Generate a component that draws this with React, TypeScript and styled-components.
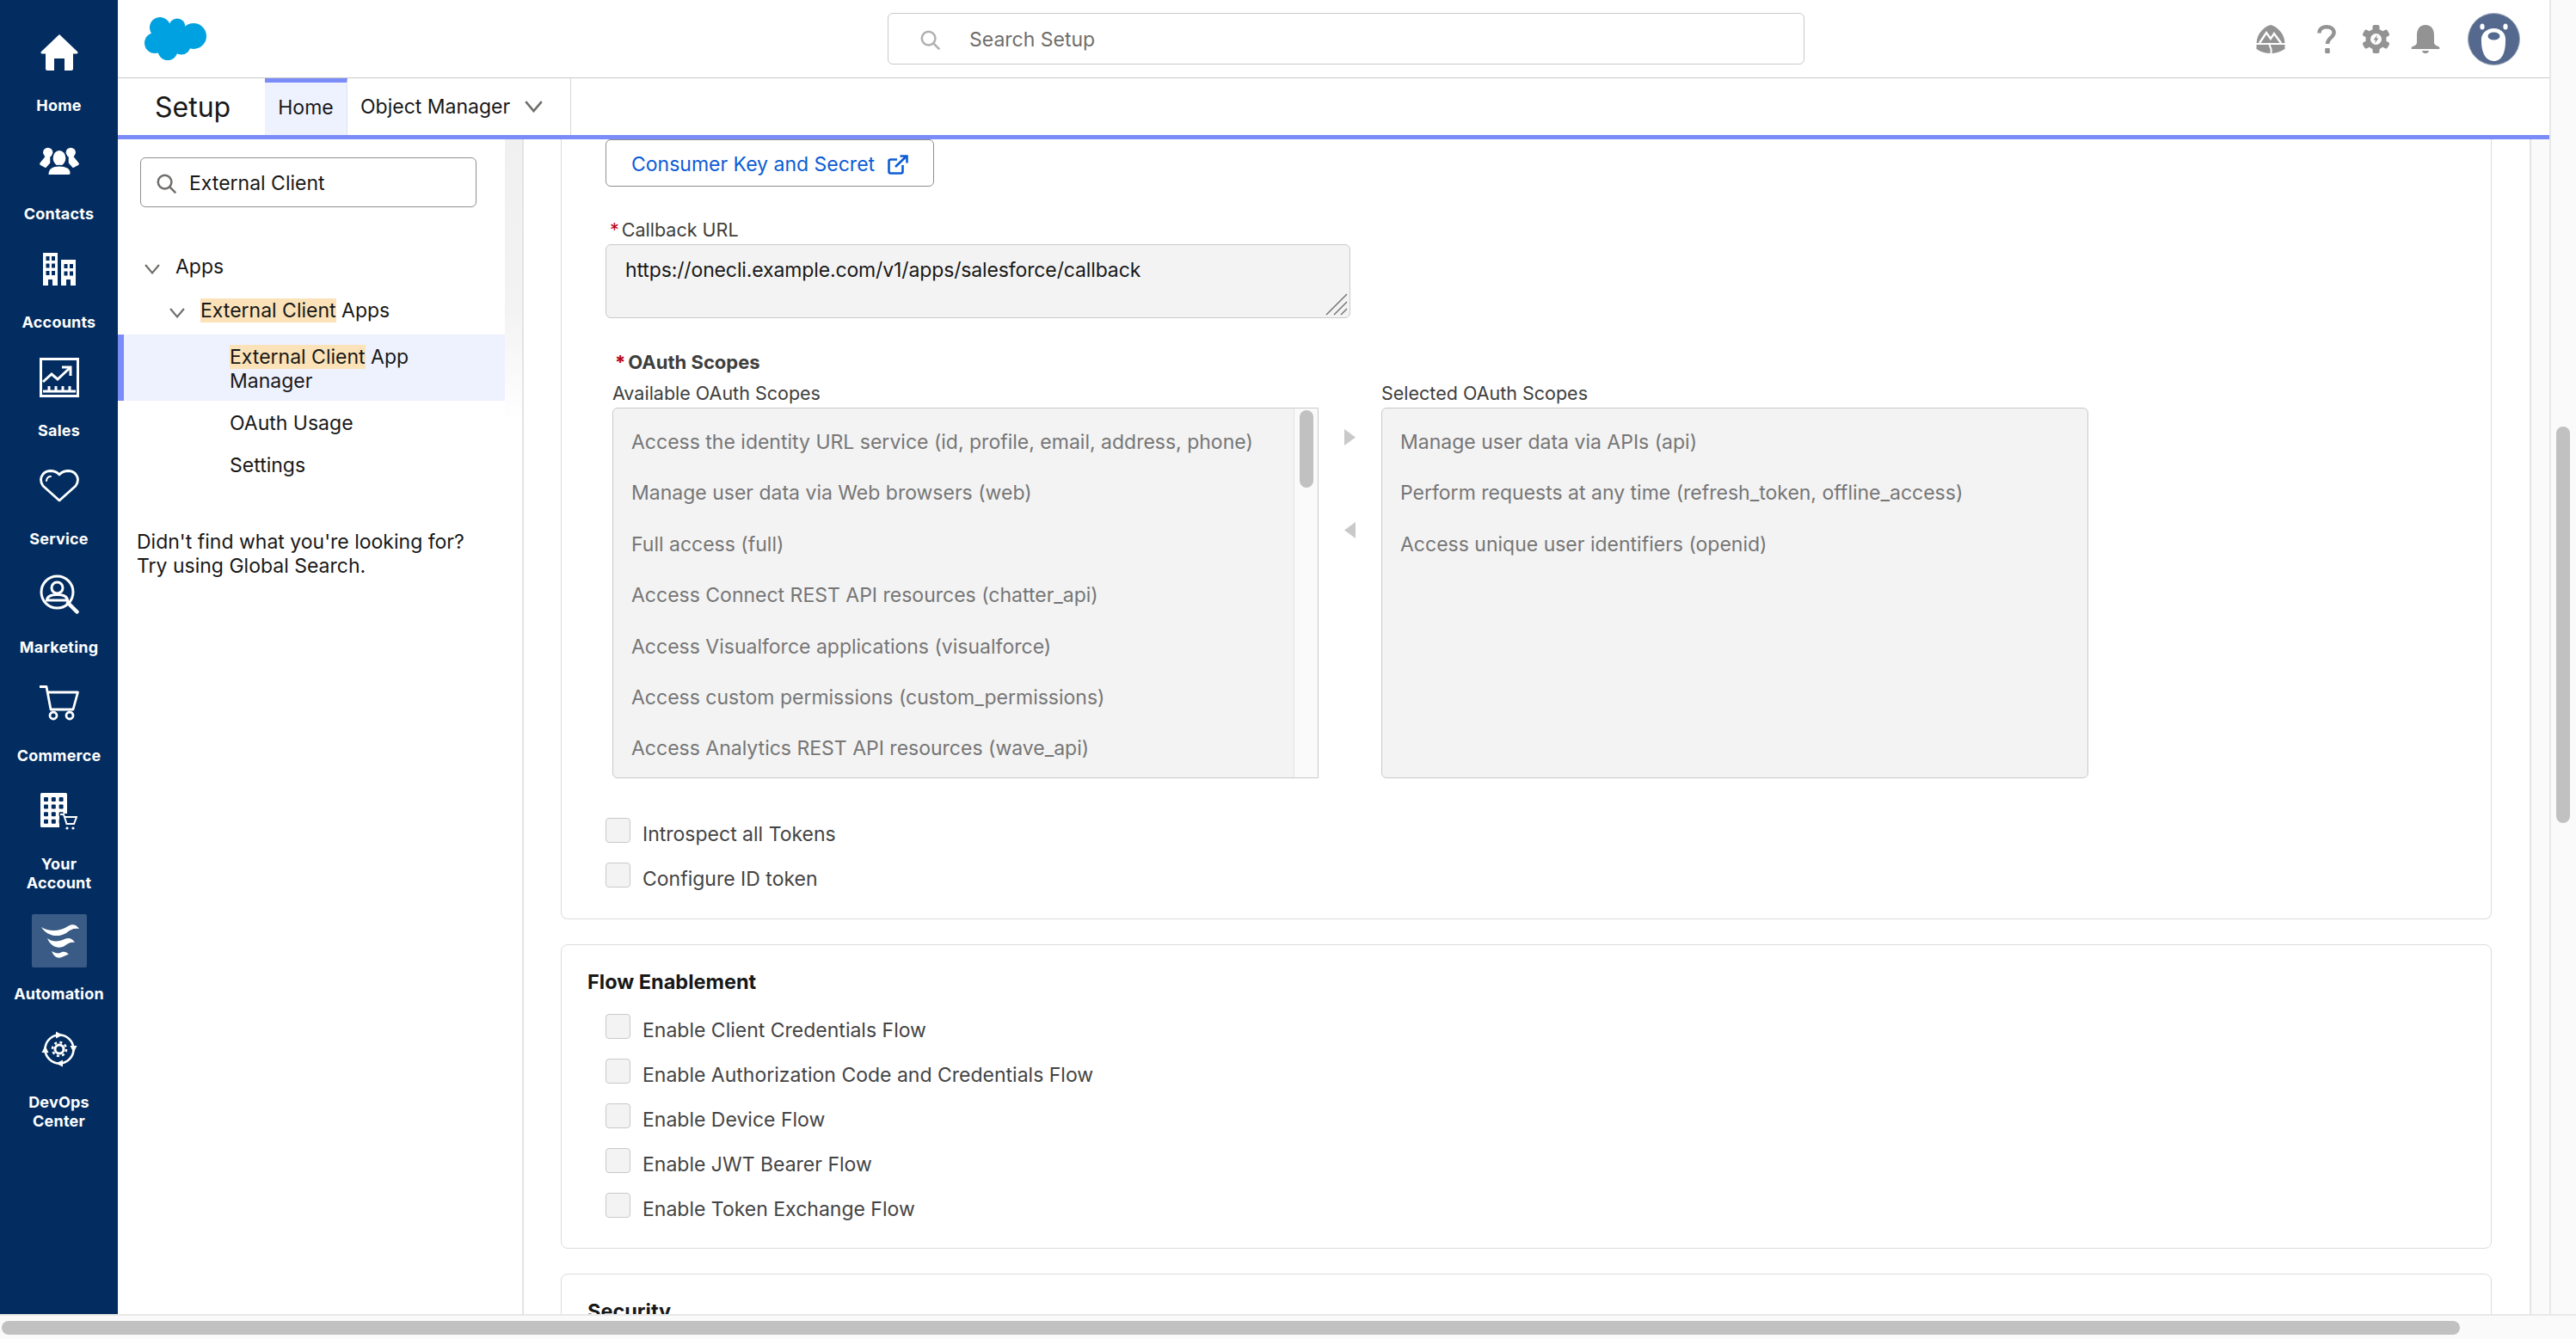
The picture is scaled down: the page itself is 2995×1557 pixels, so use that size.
import React from 'react';
import styled, { createGlobalStyle } from 'styled-components';

const Global = createGlobalStyle`
  html, body { margin: 0; padding: 0; height: 100%; overflow: hidden; background: #fff; }
  * { box-sizing: border-box; }
  body { font-family: Inter, "Liberation Sans", sans-serif; color: #181818; }
`;

const Shell = styled.div`
  display: flex;
  flex-direction: column;
  width: 100vw;
  height: 100vh;
`;
const WorkArea = styled.div`
  display: flex;
  height: 1528px;
  overflow: hidden;
`;

/* left app nav */
const Nav = styled.nav`
  width: 137px;
  flex: none;
  background: #032d60;
  padding-top: 30px;
  display: flex;
  flex-direction: column;
  align-items: center;
`;
const NavItem = styled.div<{ $tall: boolean }>`
  width: 100%;
  display: flex;
  flex-direction: column;
  align-items: center;
  margin-bottom: ${p => (p.$tall ? 25 : 22)}px;
`;
const NavIcon = styled.div<{ $active?: boolean }>`
  width: 64px;
  height: 62px;
  display: flex;
  align-items: center;
  justify-content: center;
  border-radius: 2px;
  background: ${p => (p.$active ? '#3a5b85' : 'transparent')};
`;
const NavLabel = styled.div`
  margin-top: 20px;
  color: #fff;
  font-size: 18px;
  line-height: 22px;
  font-weight: 700;
  letter-spacing: 0.2px;
  text-align: center;
  white-space: pre-line;
`;

const Main = styled.div`
  flex: 1;
  min-width: 0;
  display: flex;
  flex-direction: column;
`;

/* global header */
const Header = styled.header`
  height: 91px;
  flex: none;
  border-bottom: 1px solid #c9c9c9;
  display: grid;
  grid-template-columns: 895px 1066px 1fr;
  align-items: center;
`;
const LogoSlot = styled.div`
  padding: 0 0 0 31px;
  display: flex;
  align-items: center;
`;
const GlobalSearch = styled.div`
  height: 60px;
  border: 1px solid #c9c9c9;
  border-radius: 6px;
  display: flex;
  align-items: center;
  padding: 2px 0 0 37px;
  gap: 34px;
  font-size: 23px;
  color: #706e6b;
`;
const ToolBar = styled.div`
  display: flex;
  align-items: center;
  justify-content: flex-end;
  padding-right: 34px;
`;
const ToolIcon = styled.svg<{ $gap: number }>`
  margin-right: ${p => p.$gap}px;
  display: block;
`;

/* tab bar */
const TabBar = styled.div`
  height: 71px;
  flex: none;
  border-bottom: 5px solid #7b8cf8;
  display: flex;
`;
const AppName = styled.div`
  width: 171px;
  padding-left: 43px;
  font-size: 32px;
  line-height: 68px;
`;
const HomeTab = styled.div`
  width: 96px;
  background: #eef1fe;
  border-top: 5px solid #7b8cf8;
  border-right: 1px solid #dfe2f0;
  font-size: 23px;
  line-height: 58px;
  text-align: center;
`;
const MenuTab = styled.div`
  width: 260px;
  padding-left: 15px;
  border-right: 1px solid #d8d8d8;
  display: flex;
  align-items: center;
  gap: 17px;
  font-size: 23px;
`;

const Body = styled.div`
  flex: 1;
  min-height: 0;
  display: flex;
  overflow: hidden;
`;

/* setup tree */
const Tree = styled.aside`
  width: 450px;
  flex: none;
  font-size: 23px;
  line-height: 28px;
`;
const TreeSearch = styled.div`
  margin: 21px 33px 55px 26px;
  height: 58px;
  border: 1px solid #8f8f8f;
  border-radius: 6px;
  display: flex;
  align-items: center;
  padding: 2px 0 0 18px;
  gap: 15px;
`;
const TreeRow = styled.div<{ $indent: number; $after: number }>`
  display: flex;
  align-items: center;
  padding-left: ${p => p.$indent}px;
  margin-bottom: ${p => p.$after}px;
  gap: 18px;
  svg { margin-top: 6px; }
`;
const TreeSelected = styled.div`
  border-left: 7px solid #7b8cf8;
  background: #eef1fe;
  padding: 12px 100px 9px 123px;
  margin-bottom: 12px;
`;
const TreeLeaf = styled.div<{ $after: number }>`
  padding-left: 130px;
  margin-bottom: ${p => p.$after}px;
`;
const Mark = styled.span`
  background: #fbe2b8;
`;
const TreeHint = styled.div`
  padding-left: 22px;
`;
const TreeGutter = styled.div`
  width: 22px;
  flex: none;
  border-right: 2px solid #e4e4e4;
  background: linear-gradient(#f0f0f0, #f3f3f3 200px, #fff 330px);
`;

/* record form */
const Content = styled.div`
  flex: 1;
  min-width: 0;
  padding: 0 44px 0 43px;
  overflow: hidden;
`;
const Card = styled.section<{ $open?: boolean }>`
  border: 1px solid #dcdcdc;
  border-top: ${p => (p.$open ? 'none' : '1px solid #dcdcdc')};
  border-radius: ${p => (p.$open ? '0 0 8px 8px' : '8px')};
  margin-bottom: 29px;
  padding: ${p => (p.$open ? '0 0 31px' : '29px 0 30px')};
`;
const SecretButton = styled.div`
  margin-left: 51px;
  width: 382px;
  height: 55px;
  border: 1px solid #8f8f8f;
  border-radius: 6px;
  display: flex;
  align-items: center;
  padding: 3px 0 0 29px;
  gap: 15px;
  color: #0b5cd5;
  font-size: 23px;
`;
const Required = styled.span`
  color: #ba0517;
  margin-right: 3px;
`;
const FieldLabel = styled.div`
  margin: 36px 0 3px 56px;
  font-size: 21.5px;
  line-height: 28px;
  color: #3e3e3c;
`;
const UrlBox = styled.div`
  position: relative;
  margin-left: 51px;
  width: 866px;
  height: 86px;
  background: #f3f3f3;
  border: 1px solid #c9c9c9;
  border-radius: 6px;
  padding: 15px 22px;
  font-size: 23px;
  letter-spacing: -0.13px;
  line-height: 28px;
`;
const Grip = styled.svg`
  position: absolute;
  right: 2px;
  bottom: 2px;
`;
const ScopesTitle = styled.div`
  margin: 37px 0 8px 62px;
  font-size: 22px;
  line-height: 28px;
  font-weight: 700;
  color: #3e3e3c;
`;
const Transfer = styled.div`
  margin-left: 59px;
  display: grid;
  grid-template-columns: 821px 73px 822px;
  grid-template-rows: 28px 431px;
  row-gap: 3px;
  margin-bottom: 46px;
`;
const ColLabel = styled.div<{ $col: number }>`
  grid-column: ${p => p.$col};
  font-size: 21.5px;
  line-height: 28px;
  color: #3e3e3c;
`;
const ListBox = styled.div<{ $col: number }>`
  grid-column: ${p => p.$col};
  grid-row: 2;
  display: flex;
  background: #f3f3f3;
  border: 1px solid #c9c9c9;
  border-radius: ${p => (p.$col === 1 ? '6px 0 0 6px' : '6px')};
  overflow: hidden;
`;
const ListItems = styled.div`
  flex: 1;
  min-width: 0;
  padding: 10px 21px 0;
  overflow: hidden;
`;
const ListItem = styled.div`
  height: 59.4px;
  line-height: 59.4px;
  font-size: 23px;
  color: #767676;
  white-space: nowrap;
`;
const ListScroll = styled.div`
  width: 28px;
  flex: none;
  background: #fafafa;
  border-left: 1px solid #e5e5e5;
  padding: 2px 0 0 6px;
`;
const ListThumb = styled.div`
  width: 16px;
  height: 90px;
  border-radius: 8px;
  background: #c1c1c1;
`;
const Arrows = styled.div`
  grid-column: 2;
  grid-row: 2;
  padding: 25px 0 0 30px;
  display: flex;
  flex-direction: column;
  gap: 89px;
`;
const CheckRow = styled.div`
  height: 34px;
  margin: 0 0 18px 51px;
  display: flex;
  align-items: flex-start;
  gap: 14px;
  &:last-child { margin-bottom: 0; }
`;
const CheckBox = styled.div`
  width: 29px;
  height: 29px;
  background: #f3f3f3;
  border: 1px solid #c9c9c9;
  border-radius: 4px;
`;
const CheckLabel = styled.div`
  padding-top: 5px;
  font-size: 23px;
  line-height: 29px;
  color: #444;
`;
const CardTitle = styled.div`
  margin: 0 0 23px 30px;
  font-size: 23.5px;
  line-height: 28px;
  font-weight: 700;
`;
const ContentGutter = styled.div`
  width: 23px;
  flex: none;
  background: #fafafa;
  border-left: 2px solid #e4e4e4;
`;

/* window scrollbars */
const VTrack = styled.div`
  width: 31px;
  flex: none;
  background: #fafafa;
  border-left: 2px solid #e8e8e8;
  padding: 496px 0 0 6px;
`;
const VThumb = styled.div`
  width: 16px;
  height: 461px;
  border-radius: 8px;
  background: #c1c1c1;
`;
const HTrack = styled.div`
  flex: 1;
  background: #fafafa;
  border-top: 2px solid #e8e8e8;
  padding: 6px 0 0 2px;
`;
const HThumb = styled.div`
  width: 2858px;
  height: 16px;
  border-radius: 8px;
  background: #c1c1c1;
`;

const HomeIcon = () => (
  <svg width="44" height="42" viewBox="0 0 44 42" fill="#fff">
    <path d="M22 0 L43 20 C44 21 43.5 22.5 42 22.5 H38 V40 C38 41 37 42 36 42 H28 V28 H16 V42 H8 C7 42 6 41 6 40 V22.5 H2 C.5 22.5 0 21 1 20 Z" />
  </svg>
);
const ContactsIcon = () => (
  <svg width="46" height="33" viewBox="0 0 45 32" fill="#fff">
    <circle cx="9.5" cy="6" r="5.5" />
    <path d="M7 10 L.5 18 C0 19 0 20 1 20.5 L7 23.5 L12 18 L12 10 Z" />
    <circle cx="35.5" cy="6" r="5.5" />
    <path d="M38 10 L44.5 18 C45 19 45 20 44 20.5 L38 23.5 L33 18 L33 10 Z" />
    <ellipse cx="22.5" cy="12.5" rx="8" ry="9.5" stroke="#032d60" strokeWidth="1.6" />
    <path d="M9.5 32 C9 24 15 21 22.5 21 C30 21 36 24 35.5 30 C35.5 31.5 34 32 33 32 Z" stroke="#032d60" strokeWidth="1.6" />
  </svg>
);
const AccountsIcon = () => {
  const cells = [0, 1, 2];
  return (
    <svg width="40" height="38" viewBox="0 0 40 38">
      <path fill="#fff" d="M1 0 H18 V38 H12 V31 H7 V38 H1 Z" />
      <path fill="#fff" d="M22 8 H39 V38 H33 V31 H28 V38 H22 Z" />
      {cells.map(r => (
        <React.Fragment key={r}>
          <rect x="4.5" y={4 + r * 8.5} width="4" height="5" fill="#032d60" />
          <rect x="11" y={4 + r * 8.5} width="4" height="5" fill="#032d60" />
        </React.Fragment>
      ))}
      {[0, 1].map(r => (
        <React.Fragment key={r}>
          <rect x="25.5" y={13 + r * 8.5} width="4" height="5" fill="#032d60" />
          <rect x="32" y={13 + r * 8.5} width="4" height="5" fill="#032d60" />
        </React.Fragment>
      ))}
    </svg>
  );
};
const SalesIcon = () => (
  <svg width="46" height="46" viewBox="0 0 46 46" fill="none" stroke="#fff" strokeWidth="3">
    <rect x="1.5" y="1.5" width="43" height="43" />
    <path d="M4 28 L14 19 L21 25 L35 12" />
    <path d="M26 11 H36 V21" />
    <path d="M4 39 H42 M11 33 V39 M19 33 V39 M27 33 V39 M35 33 V39" />
  </svg>
);
const ServiceIcon = () => (
  <svg width="46" height="38" viewBox="0 0 46 38" fill="none" stroke="#fff" strokeWidth="2.8" strokeLinejoin="round">
    <path d="M23 36 L4 19 C-1 12 2 2.5 12 1.5 C17 1.5 21 3.5 23 6 C25 3.5 29 1.5 34 1.5 C44 2.5 47 12 42 19 Z" />
    <path d="M8 13 C8.5 10 10.5 8 13 8" strokeLinecap="round" strokeWidth="2" />
  </svg>
);
const MarketingIcon = () => (
  <svg width="46" height="46" viewBox="0 0 46 46" fill="none" stroke="#fff" strokeWidth="3">
    <circle cx="20.5" cy="20.5" r="18.5" />
    <circle cx="20.5" cy="15.5" r="6.5" />
    <path d="M8.5 30 C9 24.5 14 23.5 20.5 23.5 C27 23.5 32 24.5 32.5 30 Z" />
    <path d="M33 33 L43.5 43.5" strokeWidth="4.5" strokeLinecap="round" />
  </svg>
);
const CommerceIcon = () => (
  <svg width="46" height="41" viewBox="0 0 46 41" fill="none" stroke="#fff" strokeWidth="2.8" strokeLinejoin="round">
    <path d="M0 1.5 H8 L13 28 H39 L44.5 8 H9.5" />
    <circle cx="16" cy="35" r="4" />
    <circle cx="35" cy="35" r="4" />
  </svg>
);
const YourAccountIcon = () => {
  const rows = [0, 1, 2, 3];
  const cols = [0, 1, 2];
  return (
    <svg width="43" height="43" viewBox="0 0 43 43">
      <rect x="0" y="0" width="31" height="40" rx="1.5" fill="#fff" />
      {rows.map(r =>
        cols.map(c => <rect key={`${r}-${c}`} x={4 + c * 8.8} y={5 + r * 8.6} width="5" height="5" rx="1" fill="#032d60" />)
      )}
      <path d="M22 24 H43 V41 H22 Z" fill="#032d60" />
      <path d="M23 25 H27 L30.5 36 H39 L42 28 H28" fill="none" stroke="#fff" strokeWidth="2" />
      <circle cx="31" cy="41" r="1.6" fill="#fff" />
      <circle cx="38" cy="41" r="1.6" fill="#fff" />
    </svg>
  );
};
const AutomationIcon = () => (
  <svg width="64" height="62" viewBox="0 0 64 62" fill="#fff">
    <path d="M11 15 C20 21 33 20 42 14 C47 11 52 12 55 17 C48 16 45 18 40 22 C30 28 17 25 11 15 Z" />
    <path d="M18 28 C24 33 32 32 38 29 C43 27 47 28 50 33 C45 32 42 34 38 37 C31 41 22 38 18 28 Z" />
    <path d="M23 43 C28 46 32 46 35 44 C38 43 41 44 43 47 C40 47 38 49 35 50 C30 52 26 50 23 43 Z" />
  </svg>
);
const DevOpsIcon = () => (
  <svg width="46" height="46" viewBox="0 0 46 46" fill="none" stroke="#fff" strokeWidth="2.6">
    <circle cx="23" cy="23" r="16.5" />
    <path d="M19 3 L26 6.5 L19 10" fill="#fff" stroke="#fff" strokeWidth="1" />
    <path d="M43 19 L39.5 26 L36 19" fill="#fff" stroke="#fff" strokeWidth="1" />
    <path d="M27 43 L20 39.5 L27 36" fill="#fff" stroke="#fff" strokeWidth="1" />
    <path d="M3 27 L6.5 20 L10 27" fill="#fff" stroke="#fff" strokeWidth="1" />
    <circle cx="23" cy="23" r="5" strokeWidth="3" />
    <circle cx="23" cy="23" r="8" strokeWidth="2.6" strokeDasharray="3 3.3" />
  </svg>
);

const navItems: { label: string; icon: React.ReactNode; active?: boolean }[] = [
  { label: 'Home', icon: <HomeIcon /> },
  { label: 'Contacts', icon: <ContactsIcon /> },
  { label: 'Accounts', icon: <AccountsIcon /> },
  { label: 'Sales', icon: <SalesIcon /> },
  { label: 'Service', icon: <ServiceIcon /> },
  { label: 'Marketing', icon: <MarketingIcon /> },
  { label: 'Commerce', icon: <CommerceIcon /> },
  { label: 'Your\nAccount', icon: <YourAccountIcon /> },
  { label: 'Automation', icon: <AutomationIcon />, active: true },
  { label: 'DevOps\nCenter', icon: <DevOpsIcon /> },
];

const CloudLogo = () => (
  <svg width="72" height="50" viewBox="0 0 72 50" fill="#00a1e0">
    <circle cx="18" cy="12" r="12" />
    <circle cx="38" cy="11" r="9.5" />
    <circle cx="57" cy="22" r="15" />
    <circle cx="12" cy="30" r="12" />
    <circle cx="27" cy="38.5" r="11.5" />
    <circle cx="43" cy="33" r="10.5" />
    <circle cx="33" cy="23" r="16" />
  </svg>
);

const Magnifier = ({ size, color }: { size: number; color: string }) => (
  <svg width={size} height={size} viewBox="0 0 24 24" fill="none" stroke={color} strokeWidth="2.6" strokeLinecap="round">
    <circle cx="10" cy="10" r="8.2" />
    <path d="M16 16 L22.5 22.5" />
  </svg>
);

const Chevron = ({ width }: { width: number }) => (
  <svg width={width} height={width * 0.66} viewBox="0 0 18 12" fill="none" stroke="#706e6b" strokeWidth="2.2" style={{ display: 'block' }}>
    <path d="M1 1 L9 10.5 L17 1" />
  </svg>
);

const TOOL_GRAY = '#939393';

const TrailIcon = () => (
  <ToolIcon $gap={37} width="34" height="33" viewBox="0 0 34 33">
    <path fill={TOOL_GRAY} d="M17 0 C23 1 33 9 33.5 21 H.5 C1 9 11 1 17 0 Z" />
    <path fill={TOOL_GRAY} d="M.5 23 H33.5 V28 C27 32 22 33 17 33 C12 33 6 32 .5 28 Z" />
    <path fill="none" stroke="#fff" strokeWidth="2.4" d="M4 21 L12 9 L17 16 L21 10 L29 21" />
    <path fill="none" stroke="#fff" strokeWidth="2" d="M16 21 C14 25 20 27 17 33" />
  </ToolIcon>
);
const HelpIcon = () => (
  <ToolIcon $gap={31} width="22" height="33" viewBox="0 0 22 33">
    <path fill="none" stroke={TOOL_GRAY} strokeWidth="4.4" d="M2.5 9.5 C2.5 4 7 2.2 11 2.2 C16 2.2 19.6 5 19.6 9 C19.6 14.5 12 15 12 22" />
    <rect x="9.2" y="27" width="5.6" height="6" rx="1" fill={TOOL_GRAY} />
  </ToolIcon>
);
const GearIcon = () => {
  const teeth = [0, 60, 120, 180, 240, 300];
  return (
    <ToolIcon $gap={25} width="31" height="33" viewBox="0 0 31 33">
      {teeth.map(a => (
        <rect key={a} x="11.5" y="0" width="8" height="9" rx="2" fill={TOOL_GRAY} transform={`rotate(${a} 15.5 16.5)`} />
      ))}
      <circle cx="15.5" cy="16.5" r="12" fill={TOOL_GRAY} />
      <circle cx="15.5" cy="16.5" r="6.5" fill="#fff" />
      <path fill={TOOL_GRAY} d="M17 11.5 L12.5 17.5 H15 L14 21.5 L18.5 15.5 H16 Z" />
    </ToolIcon>
  );
};
const BellIcon = () => (
  <ToolIcon $gap={32} width="34" height="33" viewBox="0 0 34 33" fill={TOOL_GRAY}>
    <path d="M17 0 C24 0 27 5 27 12 V20 C27 23 29 24 32 25 C34 26 34 28 32 28 H2 C0 28 0 26 2 25 C5 24 7 23 7 20 V12 C7 5 10 0 17 0 Z" />
    <path d="M13 30 H21 C20.5 32.5 18.5 33 17 33 C15.5 33 13.5 32.5 13 30 Z" />
  </ToolIcon>
);
const BearAvatar = () => (
  <svg width="61" height="61" viewBox="0 0 61 61" style={{ display: 'block' }}>
    <circle cx="30.5" cy="30.5" r="30" fill="#54698d" stroke="#a3adbb" strokeWidth="1" />
    <ellipse cx="17" cy="16" rx="2.6" ry="3.6" fill="#fff" />
    <ellipse cx="44" cy="16" rx="2.6" ry="3.6" fill="#fff" />
    <path fill="#fff" d="M30.5 18 C40 18 45 25 44 33 C44 46 40 56 30.5 56 C21 56 16 46 16 33 C15 25 21 18 30.5 18 Z" />
    <ellipse cx="30.5" cy="27" rx="7" ry="4.5" fill="#54698d" />
  </svg>
);

const ExternalIcon = () => (
  <svg width="24" height="23" viewBox="0 0 24 23" fill="none" stroke="#0b5cd5" strokeWidth="2.6">
    <path d="M11 5.5 H3.5 A2 2 0 0 0 1.5 7.5 V19.5 A2 2 0 0 0 3.5 21.5 H15.5 A2 2 0 0 0 17.5 19.5 V12" />
    <path d="M9 14 L22 1.5 M14.5 1.5 H22.5 V9.5" />
  </svg>
);

const available = [
  'Access the identity URL service (id, profile, email, address, phone)',
  'Manage user data via Web browsers (web)',
  'Full access (full)',
  'Access Connect REST API resources (chatter_api)',
  'Access Visualforce applications (visualforce)',
  'Access custom permissions (custom_permissions)',
  'Access Analytics REST API resources (wave_api)',
];
const selected = [
  'Manage user data via APIs (api)',
  'Perform requests at any time (refresh_token, offline_access)',
  'Access unique user identifiers (openid)',
];
const flows = [
  'Enable Client Credentials Flow',
  'Enable Authorization Code and Credentials Flow',
  'Enable Device Flow',
  'Enable JWT Bearer Flow',
  'Enable Token Exchange Flow',
];

const Check = ({ label }: { label: string }) => (
  <CheckRow>
    <CheckBox />
    <CheckLabel>{label}</CheckLabel>
  </CheckRow>
);

export default function App() {
  return (
    <Shell>
      <Global />
      <WorkArea>
        <Nav>
          {navItems.map(item => (
            <NavItem key={item.label} $tall={item.label.includes('\n')}>
              <NavIcon $active={item.active}>{item.icon}</NavIcon>
              <NavLabel>{item.label}</NavLabel>
            </NavItem>
          ))}
        </Nav>
        <Main>
          <Header>
            <LogoSlot>
              <CloudLogo />
            </LogoSlot>
            <GlobalSearch>
              <Magnifier size={23} color="#b0b0b0" />
              Search Setup
            </GlobalSearch>
            <ToolBar>
              <TrailIcon />
              <HelpIcon />
              <GearIcon />
              <BellIcon />
              <BearAvatar />
            </ToolBar>
          </Header>
          <TabBar>
            <AppName>Setup</AppName>
            <HomeTab>Home</HomeTab>
            <MenuTab>
              Object Manager
              <Chevron width={21} />
            </MenuTab>
          </TabBar>
          <Body>
            <Tree>
              <TreeSearch>
                <Magnifier size={23} color="#706e6b" />
                External Client
              </TreeSearch>
              <TreeRow $indent={31} $after={23}>
                <Chevron width={18} />
                Apps
              </TreeRow>
              <TreeRow $indent={60} $after={14}>
                <Chevron width={18} />
                <span>
                  <Mark>External Client</Mark> Apps
                </span>
              </TreeRow>
              <TreeSelected>
                <Mark>External Client</Mark> App Manager
              </TreeSelected>
              <TreeLeaf $after={21}>OAuth Usage</TreeLeaf>
              <TreeLeaf $after={61}>Settings</TreeLeaf>
              <TreeHint>
                Didn't find what you're looking for?
                <br />
                Try using Global Search.
              </TreeHint>
            </Tree>
            <TreeGutter />
            <Content>
              <Card $open>
                <SecretButton>
                  Consumer Key and Secret
                  <ExternalIcon />
                </SecretButton>
                <FieldLabel>
                  <Required>*</Required>Callback URL
                </FieldLabel>
                <UrlBox>
                  https://onecli.example.com/v1/apps/salesforce/callback
                  <Grip width="26" height="26" viewBox="0 0 26 26" stroke="#706e6b" strokeWidth="1.4">
                    <path d="M1 25 L25 1 M10 25 L25 10 M18 25 L25 18" />
                  </Grip>
                </UrlBox>
                <ScopesTitle>
                  <Required>*</Required>OAuth Scopes
                </ScopesTitle>
                <Transfer>
                  <ColLabel $col={1}>Available OAuth Scopes</ColLabel>
                  <ColLabel $col={3}>Selected OAuth Scopes</ColLabel>
                  <ListBox $col={1}>
                    <ListItems>
                      {available.map(s => (
                        <ListItem key={s}>{s}</ListItem>
                      ))}
                    </ListItems>
                    <ListScroll>
                      <ListThumb />
                    </ListScroll>
                  </ListBox>
                  <Arrows>
                    <svg width="13" height="19" viewBox="0 0 13 19" fill="#c9c9c9">
                      <path d="M0 0 L13 9.5 L0 19 Z" />
                    </svg>
                    <svg width="13" height="19" viewBox="0 0 13 19" fill="#c9c9c9">
                      <path d="M13 0 L0 9.5 L13 19 Z" />
                    </svg>
                  </Arrows>
                  <ListBox $col={3}>
                    <ListItems>
                      {selected.map(s => (
                        <ListItem key={s}>{s}</ListItem>
                      ))}
                    </ListItems>
                  </ListBox>
                </Transfer>
                <Check label="Introspect all Tokens" />
                <Check label="Configure ID token" />
              </Card>
              <Card>
                <CardTitle>Flow Enablement</CardTitle>
                {flows.map(f => (
                  <Check key={f} label={f} />
                ))}
              </Card>
              <Card>
                <CardTitle>Security</CardTitle>
              </Card>
            </Content>
            <ContentGutter />
          </Body>
        </Main>
        <VTrack>
          <VThumb />
        </VTrack>
      </WorkArea>
      <HTrack>
        <HThumb />
      </HTrack>
    </Shell>
  );
}
